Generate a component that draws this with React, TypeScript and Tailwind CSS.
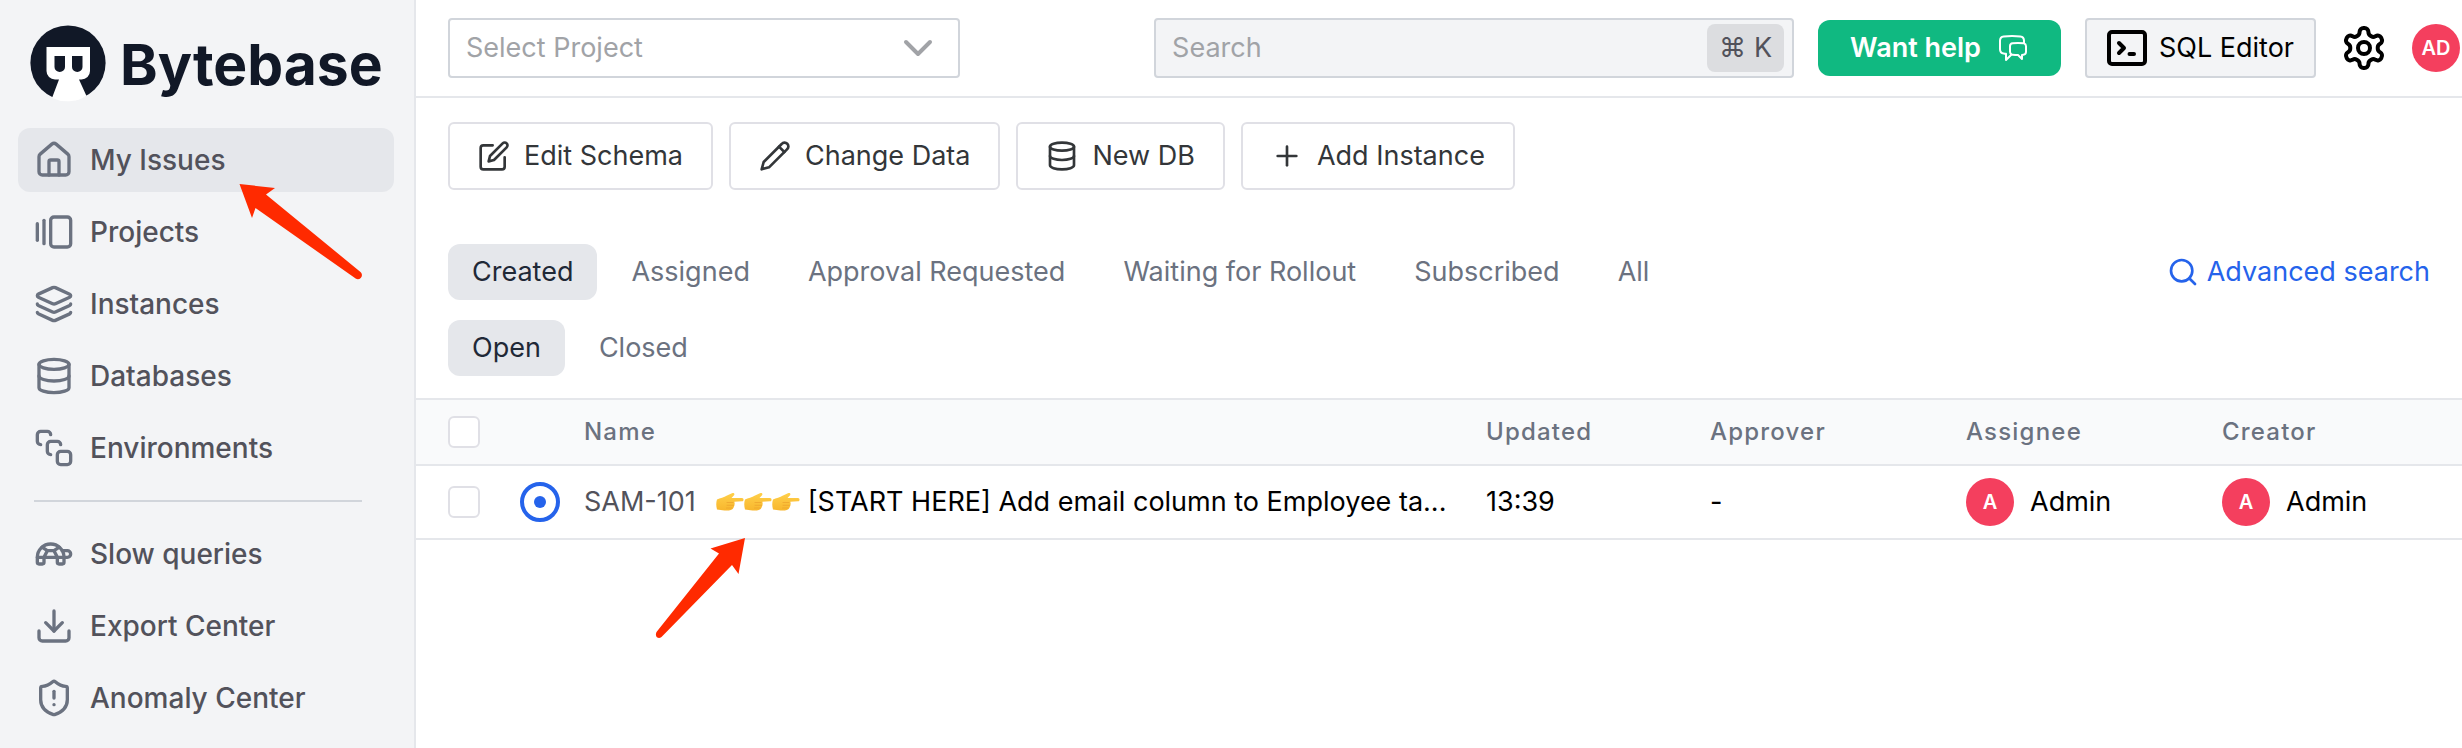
import React from "react";
import {
  Home, GalleryHorizontalEnd, Layers, Database, Turtle, Download, ShieldAlert,
  Plus, Search, ChevronDown,
} from "lucide-react";

const sans = "font-['Inter','Noto_Sans',sans-serif]";

const itemBase = "flex h-16 items-center gap-4 rounded-xl px-4 text-[28px] font-medium text-[#52525b]";

const mainNav = [
  { label: "My Issues", Icon: Home, active: true },
  { label: "Projects", Icon: GalleryHorizontalEnd },
  { label: "Instances", Icon: Layers },
  { label: "Databases", Icon: Database },
  { label: "Environments", Icon: Copies },
];

const toolNav = [
  { label: "Slow queries", Icon: Turtle },
  { label: "Export Center", Icon: Download },
  { label: "Anomaly Center", Icon: ShieldAlert },
];

type IconProps = { className?: string; strokeWidth?: number };

function Copies({ className }: IconProps) {
  return (
    <svg viewBox="0 0 24 24" fill="none" stroke="currentColor" strokeWidth="2" strokeLinecap="round" strokeLinejoin="round" className={className}>
      <rect x="14" y="14" width="8" height="8" rx="2" />
      <path d="M4 10a2 2 0 0 1-2-2V4c0-1.1.9-2 2-2h4a2 2 0 0 1 2 2" />
      <path d="M10 16a2 2 0 0 1-2-2v-4c0-1.1.9-2 2-2h4a2 2 0 0 1 2 2" />
    </svg>
  );
}

function EditSquare({ className }: IconProps) {
  return (
    <svg viewBox="0 0 24 24" fill="none" stroke="currentColor" strokeWidth="2" strokeLinecap="round" strokeLinejoin="round" className={className}>
      <path d="M11 4H4a2 2 0 0 0-2 2v14a2 2 0 0 0 2 2h14a2 2 0 0 0 2-2v-7" />
      <path d="M18.500 2.500a2.120 2.120 0 0 1 3 3L12 15l-4 1 1-4Z" />
    </svg>
  );
}

function PencilLine({ className }: IconProps) {
  return (
    <svg viewBox="0 0 24 24" fill="none" stroke="currentColor" strokeWidth="2" strokeLinecap="round" strokeLinejoin="round" className={className}>
      <path d="M17 3a2.850 2.830 0 1 1 4 4L7.500 20.500 2 22l1.500-5.500Z" />
      <path d="m15 5 4 4" />
    </svg>
  );
}

function Logo() {
  return (
    <a href="#" className="flex h-32 items-center gap-3.5 pl-3">
      <svg viewBox="0 0 76 78" className="h-[78px] w-[76px] shrink-0" aria-hidden="true">
        <circle cx="38" cy="38" r="37.6" fill="#111827" />
        <path d="M16.500 22H60v24a8.500 8.500 0 0 1-8.500 8.500H49L56.500 71a37 37 0 0 1-34.500 2L29 54.500H25a8.500 8.500 0 0 1-8.500-8.500z" fill="#fff" />
        <path d="M22 72.500 L56 71.500 A40 40 0 0 1 22 72.500z" fill="#fff" />
        <path d="M24.500 31H35V42a5.250 5 0 0 1-10.500 0zM42 31H52.500V42a5.250 5 0 0 1-10.500 0z" fill="#111827" />
      </svg>
      <span className="text-[57px] leading-none font-bold text-[#111827]">Bytebase</span>
    </a>
  );
}

function NavItem({ label, Icon, active }: { label: string; Icon: React.ComponentType<IconProps>; active?: boolean }) {
  return (
    <li>
      <a href="#" className={active ? `${itemBase} bg-[#e5e7eb]` : itemBase}>
        <Icon className="size-10 shrink-0 text-[#6b7280]" strokeWidth={2} />
        {label}
      </a>
    </li>
  );
}

function Hand() {
  return (
    <svg viewBox="0 0 28 20" className="h-5 w-7" aria-hidden="true">
      <defs>
        <linearGradient id="skin" x1="0" y1="0" x2="0" y2="1">
          <stop offset="0" stopColor="#ffd04a" />
          <stop offset="1" stopColor="#f8b62d" />
        </linearGradient>
      </defs>
      <path d="M1 7.500C4 6 8 5.500 11 3.500L16.500 1C18.300.600 19 2.200 17.800 3.400L15.500 6H26C28 6 28 9.300 26 9.300L18.300 9.800C19 11.500 18.700 13.500 17.600 15.500C16.500 18.800 11 19 6.500 18.200L1 17.500C0 14 0 10.500 1 7.500Z" fill="url(#skin)" />
      <path d="M11 10.500H17M11 13.300H17.500M10.500 16H16" stroke="#eda52c" strokeWidth="0.8" strokeLinecap="round" />
    </svg>
  );
}

function Arrow({ d, box, className }: { d: string; box: string; className: string }) {
  return (
    <svg viewBox={box} className={`pointer-events-none absolute ${className}`} aria-hidden="true">
      <path d={d} fill="#ff2a00" />
    </svg>
  );
}

const action = "flex h-[68px] items-center gap-3.5 rounded-md border-2 border-[#e0e0e6] px-7 text-[27px] text-[#333639]";
const tab = "h-14 rounded-xl px-6 text-[27px]";
const th = "px-4 text-left text-2xl font-medium tracking-wider text-[#6b7280]";
const box = "block size-8 appearance-none rounded-md border-2 border-[#e0e0e6] bg-white";

function Person() {
  return (
    <div className="flex items-center gap-4">
      <span className="flex size-12 items-center justify-center rounded-full bg-[#f43f5e] text-xl font-semibold text-white">A</span>
      Admin
    </div>
  );
}

export default function App() {
  return (
    <div className={`flex min-h-screen bg-white text-black ${sans}`}>
      <aside className="relative w-[416px] shrink-0 border-r-2 border-[#e5e7eb] bg-[#f3f4f6] pr-5 pl-[18px]">
        <Logo />
        <nav aria-label="Main">
          <ul className="flex flex-col gap-2">
            {mainNav.map((n) => <NavItem key={n.label} {...n} />)}
          </ul>
          <hr className="mt-5 mr-8 mb-5 ml-4 border-t-2 border-[#d1d5db]" />
          <ul className="flex flex-col gap-2">
            {toolNav.map((n) => <NavItem key={n.label} {...n} />)}
          </ul>
        </nav>
        <Arrow className="top-[180px] left-[236px] h-[104px] w-[130px]" box="0 0 130 104" d="M3.500 4L39 8L30 14.500L124.500 92C128 95.500 124.500 100.500 120 98.800L19.500 28L16 38Z" />
      </aside>

      <main className="relative min-w-0 flex-1">
        <header className="flex h-[98px] items-center border-b-2 border-[#e5e7eb] pl-8">
          <button className="flex h-[60px] w-[512px] items-center justify-between rounded border-2 border-[#d1d5db] px-4 text-[27px] text-[#a1a3a7]">
            Select Project
            <ChevronDown className="size-12" strokeWidth={2} />
          </button>
          <div className="ml-auto flex h-[60px] w-[640px] items-center rounded border-2 border-[#d1d5db] bg-[#f3f4f6] pr-2 pl-4">
            <input aria-label="Search" placeholder="Search" className="min-w-0 flex-1 bg-transparent text-[27px] outline-none placeholder:text-[#a1a3a7]" />
            <kbd className={`flex h-12 items-center gap-2 rounded-lg bg-[#dcdde0] px-3 text-[27px] text-[#52525b] ${sans}`}>
              <span>⌘</span><span>K</span>
            </kbd>
          </div>
          <button className="ml-6 flex h-14 items-center gap-4 rounded-xl bg-[#10b981] px-8 text-[27px] font-semibold text-white">
            Want help
            <svg viewBox="0 0 24 24" className="size-8" fill="none" stroke="currentColor" strokeWidth="1.500" strokeLinejoin="round" aria-hidden="true">
              <path d="M20.250 8.511c.884.284 1.500 1.128 1.500 2.097v4.286c0 1.136-.847 2.100-1.980 2.193-.340.027-.680.052-1.020.072v3.091l-3-3c-1.354 0-2.694-.055-4.020-.163a2.115 2.115 0 0 1-.825-.242m9.345-8.334a2.126 2.126 0 0 0-.476-.095 48.640 48.640 0 0 0-8.048 0c-1.131.094-1.976 1.057-1.976 2.192v4.286c0 .837.460 1.580 1.155 1.951m9.345-8.334V6.637c0-1.621-1.152-3.026-2.760-3.235A48.455 48.455 0 0 0 11.250 3c-2.115 0-4.198.137-6.240.402-1.608.209-2.760 1.614-2.760 3.235v6.226c0 1.621 1.152 3.026 2.760 3.235.577.075 1.157.140 1.740.194V21l4.155-4.155" />
            </svg>
          </button>
          <button className="ml-6 flex h-[60px] items-center gap-3 rounded border-2 border-[#d1d5db] bg-[#f3f4f6] px-5 text-[27px]">
            <svg viewBox="0 0 40 36" className="h-9 w-10" fill="none" stroke="currentColor" strokeWidth="4" strokeLinecap="round" strokeLinejoin="round" aria-hidden="true">
              <rect x="2" y="2" width="36" height="32" rx="3" />
              <path d="M12 13L17 18L12 23M22.500 24H27" />
            </svg>
            SQL Editor
          </button>
          <button aria-label="Settings" className="ml-6">
            <svg viewBox="0 0 24 24" className="size-12" fill="none" stroke="currentColor" strokeWidth="2" strokeLinejoin="round" aria-hidden="true">
              <path d="M12.220 2h-.440a2 2 0 0 0-2 2v.180a2 2 0 0 1-1 1.730l-.430.250a2 2 0 0 1-2 0l-.150-.080a2 2 0 0 0-2.730.730l-.220.380a2 2 0 0 0 .730 2.730l.150.100a2 2 0 0 1 1 1.720v.510a2 2 0 0 1-1 1.740l-.150.090a2 2 0 0 0-.730 2.730l.220.380a2 2 0 0 0 2.730.730l.150-.080a2 2 0 0 1 2 0l.430.250a2 2 0 0 1 1 1.730V20a2 2 0 0 0 2 2h.440a2 2 0 0 0 2-2v-.180a2 2 0 0 1 1-1.730l.430-.250a2 2 0 0 1 2 0l.150.080a2 2 0 0 0 2.730-.730l.220-.390a2 2 0 0 0-.730-2.730l-.150-.080a2 2 0 0 1-1-1.740v-.500a2 2 0 0 1 1-1.740l.150-.090a2 2 0 0 0 .730-2.730l-.220-.380a2 2 0 0 0-2.730-.730l-.150.080a2 2 0 0 1-2 0l-.430-.250a2 2 0 0 1-1-1.730V4a2 2 0 0 0-2-2z" />
              <circle cx="12" cy="12" r="3" />
            </svg>
          </button>
          <span className="mr-0.5 ml-6 flex size-12 items-center justify-center rounded-full bg-[#f43f5e] text-xl font-semibold text-white">AD</span>
        </header>

        <div className="flex gap-4 px-8 pt-6">
          <button className={action}><EditSquare className="size-8" />Edit Schema</button>
          <button className={action}><PencilLine className="size-8" />Change Data</button>
          <button className={action}><Database className="size-8" />New DB</button>
          <button className={action}><Plus className="size-8" />Add Instance</button>
        </div>

        <div className="mt-[54px] flex items-center gap-2.5 px-8">
          <button className={`${tab} bg-[#e5e7eb] text-[#1f2937]`}>Created</button>
          {["Assigned", "Approval Requested", "Waiting for Rollout", "Subscribed", "All"].map((t) => (
            <button key={t} className={`${tab} text-[#6b7280]`}>{t}</button>
          ))}
          <a href="#" className="ml-auto flex items-center gap-2 text-[27px] text-[#2563eb]">
            <Search className="size-8" />Advanced search
          </a>
        </div>
        <div className="mt-5 flex gap-2.5 px-8">
          <button className={`${tab} bg-[#e5e7eb] text-[#1f2937]`}>Open</button>
          <button className={`${tab} text-[#6b7280]`}>Closed</button>
        </div>

        <table className="mt-[22px] w-full table-fixed border-collapse text-[27px]">
          <colgroup>
            <col className="w-20" />
            <col className="w-[72px]" />
            <col />
            <col className="w-56" />
            <col className="w-64" />
            <col className="w-64" />
            <col className="w-64" />
          </colgroup>
          <thead>
            <tr className="h-[66px] border-y-2 border-[#e5e7eb] bg-[#f9fafb]">
              <th className="pl-8"><input type="checkbox" aria-label="Select all issues" className={box} /></th>
              <th aria-label="Status" />
              <th className={th}>Name</th>
              <th className={th}>Updated</th>
              <th className={th}>Approver</th>
              <th className={th}>Assignee</th>
              <th className={th}>Creator</th>
            </tr>
          </thead>
          <tbody>
            <tr className="h-[74px] border-b-2 border-[#e5e7eb]">
              <td className="pl-8"><input type="checkbox" aria-label="Select SAM-101" className={box} /></td>
              <td className="pl-6">
                <span className="flex size-10 items-center justify-center rounded-full border-4 border-[#2563eb]">
                  <span className="size-3 rounded-full bg-[#2563eb]" />
                </span>
              </td>
              <td className="px-4">
                <div className="flex items-center">
                  <span className="mr-5 shrink-0 text-[#52525b]">SAM-101</span>
                  <span className="mr-2 flex shrink-0"><Hand /><Hand /><Hand /></span>
                  <a href="#" className="truncate">[START HERE] Add email column to Employee ta...</a>
                </div>
              </td>
              <td className="px-4">13:39</td>
              <td className="px-4">-</td>
              <td className="px-4"><Person /></td>
              <td className="px-4"><Person /></td>
            </tr>
          </tbody>
        </table>
        <Arrow className="top-[536px] left-[238px] h-[104px] w-[94px]" box="0 0 94 104" d="M91 2L84.500 38L78 29L7.500 101C4 103.500.5 100.500 2.500 96L65 17.500L56.500 12.500Z" />
      </main>
    </div>
  );
}
